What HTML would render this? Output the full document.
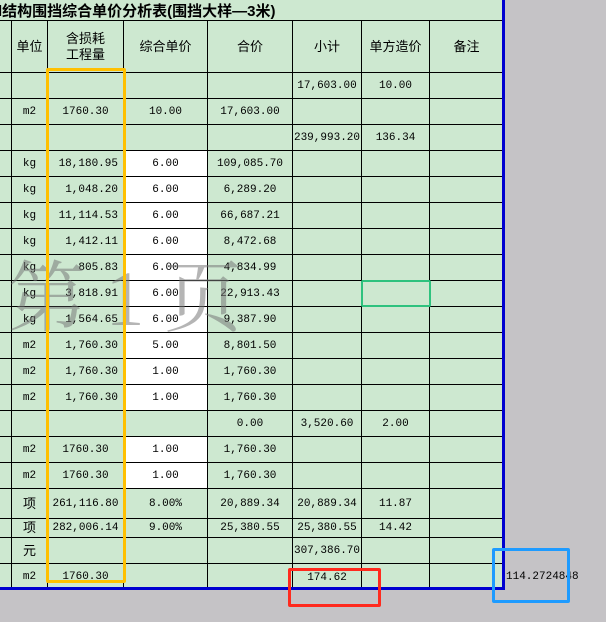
<!DOCTYPE html>
<html><head><meta charset="utf-8"><style>
body{margin:0;width:606px;height:622px;background:#c5c3c6;position:relative;overflow:hidden;font-family:"Liberation Mono","Noto Sans CJK SC",monospace;font-size:11px;color:#000}
#sheet{position:absolute;left:0;top:0;width:502px;height:588px;background:#cde8d0}
#title{position:absolute;left:-2px;top:0;height:20px;line-height:18px;font:bold 15px "Liberation Sans","Noto Sans CJK SC",sans-serif;white-space:nowrap}
table{position:absolute;left:-1px;top:20px;width:504px;border-collapse:collapse;table-layout:fixed}
td{border:1px solid #000;padding:0;text-align:center;white-space:nowrap;overflow:hidden;line-height:12px}
td.r{text-align:right;padding-right:5px}
td.w{background:#fff}
th{border:1px solid #000;font:normal 13px "Liberation Sans","Noto Sans CJK SC",sans-serif;line-height:16px}
.cj{font-family:"Liberation Sans","Noto Sans CJK SC",sans-serif;font-size:13px}
#vb{position:absolute;left:502px;top:0;width:3px;height:590px;background:#0000d0}
#hb{position:absolute;left:0;top:587px;width:505px;height:3px;background:#0000d0}
.box{position:absolute;box-sizing:border-box;border-radius:2px}
#wm{position:absolute;left:8px;top:236px;font:78px "Liberation Serif","Noto Serif CJK SC",serif;color:rgba(120,120,120,.55);white-space:nowrap}
</style></head><body>
<div id="sheet">
<div id="title">l结构围挡综合单价分析表(围挡大样—3米)</div>
<table>
<colgroup><col style="width:12px"><col style="width:36px"><col style="width:76px"><col style="width:84px"><col style="width:85px"><col style="width:69px"><col style="width:68px"><col style="width:74px"></colgroup>
<tr style="height:52px"><th></th><th>单位</th><th>含损耗<br>工程量</th><th>综合单价</th><th>合价</th><th>小计</th><th>单方造价</th><th>备注</th></tr>
<tr style="height:26px"><td></td><td></td><td></td><td></td><td></td><td>17,603.00</td><td>10.00</td><td></td></tr>
<tr style="height:26px"><td></td><td>m2</td><td>1760.30</td><td>10.00</td><td>17,603.00</td><td></td><td></td><td></td></tr>
<tr style="height:26px"><td></td><td></td><td></td><td></td><td></td><td>239,993.20</td><td>136.34</td><td></td></tr>
<tr style="height:26px"><td></td><td>kg</td><td class="r">18,180.95</td><td class="w">6.00</td><td>109,085.70</td><td></td><td></td><td></td></tr>
<tr style="height:26px"><td></td><td>kg</td><td class="r">1,048.20</td><td class="w">6.00</td><td>6,289.20</td><td></td><td></td><td></td></tr>
<tr style="height:26px"><td></td><td>kg</td><td class="r">11,114.53</td><td class="w">6.00</td><td>66,687.21</td><td></td><td></td><td></td></tr>
<tr style="height:26px"><td></td><td>kg</td><td class="r">1,412.11</td><td class="w">6.00</td><td>8,472.68</td><td></td><td></td><td></td></tr>
<tr style="height:26px"><td></td><td>kg</td><td class="r">805.83</td><td class="w">6.00</td><td>4,834.99</td><td></td><td></td><td></td></tr>
<tr style="height:26px"><td></td><td>kg</td><td class="r">3,818.91</td><td class="w">6.00</td><td>22,913.43</td><td></td><td></td><td></td></tr>
<tr style="height:26px"><td></td><td>kg</td><td class="r">1,564.65</td><td class="w">6.00</td><td>9,387.90</td><td></td><td></td><td></td></tr>
<tr style="height:26px"><td></td><td>m2</td><td class="r">1,760.30</td><td class="w">5.00</td><td>8,801.50</td><td></td><td></td><td></td></tr>
<tr style="height:26px"><td></td><td>m2</td><td class="r">1,760.30</td><td class="w">1.00</td><td>1,760.30</td><td></td><td></td><td></td></tr>
<tr style="height:26px"><td></td><td>m2</td><td class="r">1,760.30</td><td class="w">1.00</td><td>1,760.30</td><td></td><td></td><td></td></tr>
<tr style="height:26px"><td></td><td></td><td></td><td></td><td>0.00</td><td>3,520.60</td><td>2.00</td><td></td></tr>
<tr style="height:26px"><td></td><td>m2</td><td>1760.30</td><td class="w">1.00</td><td>1,760.30</td><td></td><td></td><td></td></tr>
<tr style="height:26px"><td></td><td>m2</td><td>1760.30</td><td class="w">1.00</td><td>1,760.30</td><td></td><td></td><td></td></tr>
<tr style="height:30px"><td></td><td class="cj">项</td><td>261,116.80</td><td>8.00%</td><td>20,889.34</td><td>20,889.34</td><td>11.87</td><td></td></tr>
<tr style="height:19px"><td></td><td class="cj">项</td><td>282,006.14</td><td>9.00%</td><td>25,380.55</td><td>25,380.55</td><td>14.42</td><td></td></tr>
<tr style="height:26px"><td></td><td class="cj">元</td><td></td><td></td><td></td><td>307,386.70</td><td></td><td></td></tr>
<tr style="height:26px"><td></td><td>m2</td><td>1760.30</td><td></td><td></td><td style="vertical-align:top;padding-top:8px">174.62</td><td></td><td></td></tr>
</table>
</div>
<div id="wm">第 1 页</div>
<div id="vb"></div><div id="hb"></div>
<div style="position:absolute;left:506px;top:571px">114.2724848</div>
<div class="box" style="left:46px;top:68px;width:80px;height:515px;border:3px solid #ffc000"></div>
<div class="box" style="left:288px;top:568px;width:93px;height:39px;border:3px solid #ff2a1e"></div>
<div class="box" style="left:492px;top:548px;width:78px;height:55px;border:3px solid #1e9bff"></div>
<div class="box" style="left:361px;top:280px;width:70px;height:27px;border:2px solid #2ec27e"></div>
</body></html>
